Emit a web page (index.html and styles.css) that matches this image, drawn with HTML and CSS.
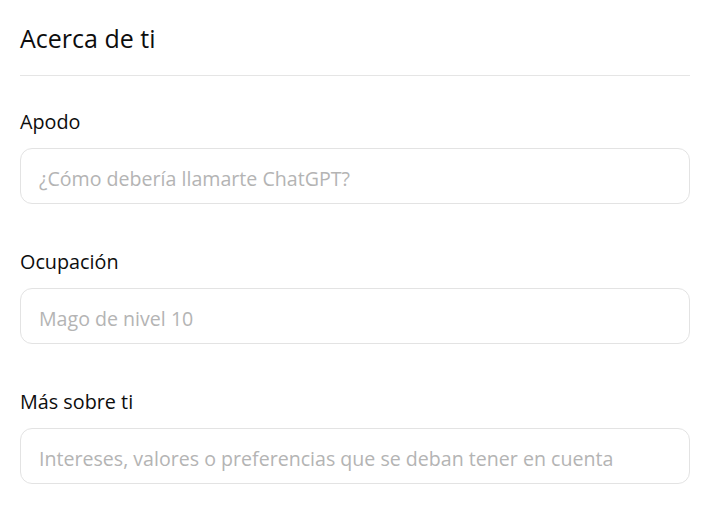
FILE: index.html
```html
<!DOCTYPE html>
<html lang="es">
<head>
<meta charset="utf-8">
<link rel="stylesheet" href="styles.css">
</head>
<body>
<div class="panel">
  <h2 class="title">Acerca de ti</h2>
  <div class="form">
    <label class="field">
      <span class="label">Apodo</span>
      <input class="input" type="text" placeholder="¿Cómo debería llamarte ChatGPT?">
    </label>
    <label class="field">
      <span class="label">Ocupación</span>
      <input class="input" type="text" placeholder="Mago de nivel 10">
    </label>
    <label class="field">
      <span class="label">Más sobre ti</span>
      <input class="input" type="text" placeholder="Intereses, valores o preferencias que se deban tener en cuenta">
    </label>
  </div>
</div>
</body>
</html>
```

FILE: styles.css
```css
html, body {
  margin: 0;
  padding: 0;
  background: #ffffff;
}
body {
  font-family: "Open Sans", "Noto Sans", sans-serif;
  color: #0d0d0d;
}
.panel {
  padding: 22px 21px 0 20px;
}
.title {
  margin: 0;
  font-size: 25px;
  font-weight: 400;
  line-height: 32px;
  padding-bottom: 21px;
  border-bottom: 1px solid #e5e5e5;
}
.form {
  display: flex;
  flex-direction: column;
  gap: 44px;
  padding-top: 32px;
}
.field {
  display: flex;
  flex-direction: column;
  gap: 12px;
}
.label {
  font-size: 19.8px;
  line-height: 28px;
}
.input {
  box-sizing: border-box;
  height: 56px;
  width: 100%;
  margin: 0;
  border: 1px solid #e3e3e3;
  border-radius: 12px;
  padding: 4px 18px 0 18px;
  font-family: inherit;
  font-size: 19.6px;
  color: #0d0d0d;
  background: #fff;
  outline: none;
}
.input::placeholder {
  color: #b4b4b4;
  opacity: 1;
}
```
